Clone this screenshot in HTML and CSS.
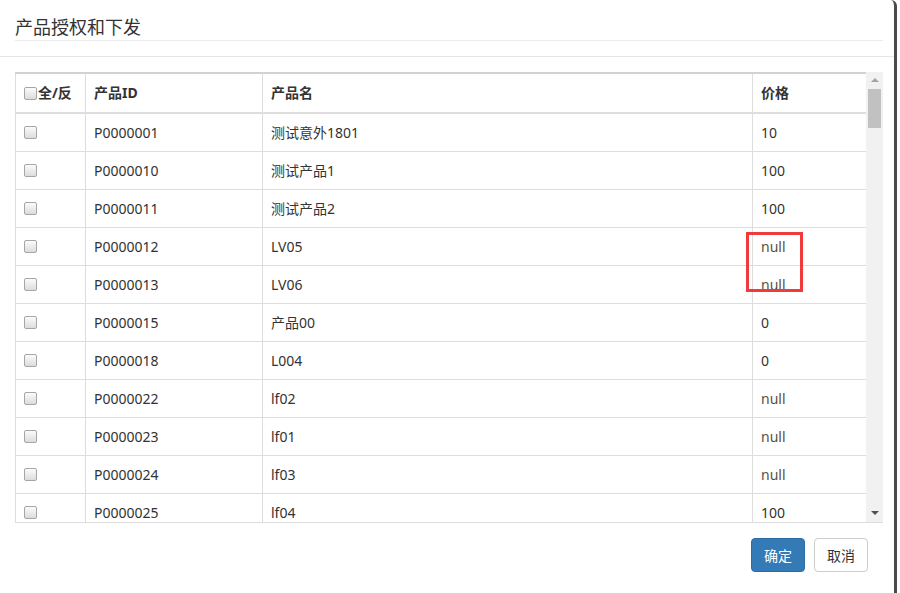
FILE: index.html
```html
<!DOCTYPE html>
<html lang="zh-CN">
<head>
<meta charset="utf-8">
<title>产品授权和下发</title>
<link rel="stylesheet" href="styles.css">
</head>
<body>
<div class="modal">
  <div class="modal-header">
    <h4 class="modal-title">产品授权和下发</h4>
  </div>
  <div class="modal-body">
    <div class="table-box">
      <div class="table-view">
        <table class="grid">
          <colgroup>
            <col class="c1"><col class="c2"><col class="c3"><col class="c4">
          </colgroup>
          <thead>
            <tr>
              <th><span class="cb"></span>全/反</th>
              <th>产品ID</th>
              <th>产品名</th>
              <th>价格</th>
            </tr>
          </thead>
          <tbody>
            <tr><td><span class="cb"></span></td><td>P0000001</td><td>测试意外1801</td><td>10</td></tr>
            <tr><td><span class="cb"></span></td><td>P0000010</td><td>测试产品1</td><td>100</td></tr>
            <tr><td><span class="cb"></span></td><td>P0000011</td><td>测试产品2</td><td>100</td></tr>
            <tr><td><span class="cb"></span></td><td>P0000012</td><td>LV05</td><td class="null">null</td></tr>
            <tr><td><span class="cb"></span></td><td>P0000013</td><td>LV06</td><td class="null">null</td></tr>
            <tr><td><span class="cb"></span></td><td>P0000015</td><td>产品00</td><td>0</td></tr>
            <tr><td><span class="cb"></span></td><td>P0000018</td><td>L004</td><td>0</td></tr>
            <tr><td><span class="cb"></span></td><td>P0000022</td><td>lf02</td><td class="null">null</td></tr>
            <tr><td><span class="cb"></span></td><td>P0000023</td><td>lf01</td><td class="null">null</td></tr>
            <tr><td><span class="cb"></span></td><td>P0000024</td><td>lf03</td><td class="null">null</td></tr>
            <tr><td><span class="cb"></span></td><td>P0000025</td><td>lf04</td><td>100</td></tr>
          </tbody>
        </table>
      </div>
      <div class="vscroll">
        <div class="arrow up"></div>
        <div class="thumb"></div>
        <div class="track-fill"></div>
        <div class="arrow down"></div>
      </div>
    </div>
  </div>
  <div class="modal-footer">
    <button class="btn btn-primary">确定</button>
    <button class="btn btn-default">取消</button>
  </div>
  <div class="mark"></div>
</div>
</body>
</html>
```
FILE: styles.css
```css
html, body {
  margin: 0;
  padding: 0;
  background: #ffffff;
}
body {
  font-family: "Noto Sans", "Noto Sans CJK SC", sans-serif;
  font-size: 14px;
  color: #333;
  width: 900px;
  height: 593px;
  overflow: hidden;
}
.modal {
  position: relative;
  width: 894px;
  height: 593px;
  background: #fff;
  border-right: 3px solid #4a4a4a;
  border-top-right-radius: 6px;
}
.modal-header {
  padding: 15px 11px 15px 15px;
  border-bottom: 1px solid #e5e5e5;
}
.modal-title {
  margin: 0;
  font-size: 18px;
  font-weight: normal;
  line-height: 25px;
  color: #333;
  border-bottom: 1px solid #ececec;
}
.modal-body {
  padding: 15px 11px 0 15px;
}
.table-box {
  display: flex;
  height: 450px;
  border-bottom: 1px solid #dddddd;
}
.table-view {
  width: 851px;
  overflow: hidden;
}
.grid {
  table-layout: fixed;
  width: 851px;
  border-collapse: collapse;
}
.grid col.c1 { width: 70px; }
.grid col.c2 { width: 177px; }
.grid col.c3 { width: 490px; }
.grid col.c4 { width: 114px; }
.grid th, .grid td {
  border: 1px solid #dddddd;
  padding: 8px;
  text-align: left;
  white-space: nowrap;
  vertical-align: middle;
}
.grid th {
  font-weight: bold;
  line-height: 22px;
  border-top: 2px solid #d2d2d2;
  border-bottom: 2px solid #dddddd;
}
.grid td {
  line-height: 21px;
}
.grid td.null {
  color: #5a5040;
}
.cb {
  display: inline-block;
  box-sizing: border-box;
  width: 13px;
  height: 13px;
  border: 1px solid #a6a6a6;
  border-radius: 2px;
  background: linear-gradient(#fbfbfb, #dcdcdc);
  vertical-align: -1px;
}
.grid th .cb {
  margin-right: 1px;
  vertical-align: -2px;
}
.vscroll {
  width: 17px;
  background: #f1f1f1;
  display: flex;
  flex-direction: column;
  align-items: center;
}
.arrow {
  width: 0;
  height: 0;
  border-left: 4px solid transparent;
  border-right: 4px solid transparent;
}
.arrow.up {
  margin-top: 6px;
  border-bottom: 4px solid #a3a3a3;
}
.thumb {
  margin-top: 7px;
  width: 13px;
  height: 39px;
  background: #c1c1c1;
}
.track-fill {
  flex: 1;
}
.arrow.down {
  margin-bottom: 7px;
  border-top: 4px solid #505050;
}
.modal-footer {
  display: flex;
  justify-content: flex-end;
  gap: 9px;
  padding: 15px 26px 0 0;
}
.btn {
  font-family: "Noto Sans CJK SC", sans-serif;
  font-size: 14px;
  line-height: 20px;
  padding: 6px 12px;
  border-radius: 4px;
  border: 1px solid transparent;
  height: 34px;
  box-sizing: border-box;
  cursor: pointer;
}
.btn-primary {
  color: #fff;
  background: #337ab7;
  border-color: #2e6da4;
}
.btn-default {
  color: #333;
  background: #fff;
  border-color: #ccc;
}
.mark {
  position: absolute;
  left: 746px;
  top: 232px;
  width: 57px;
  height: 60px;
  box-sizing: border-box;
  border: 3px solid #f03a3c;
}
```
